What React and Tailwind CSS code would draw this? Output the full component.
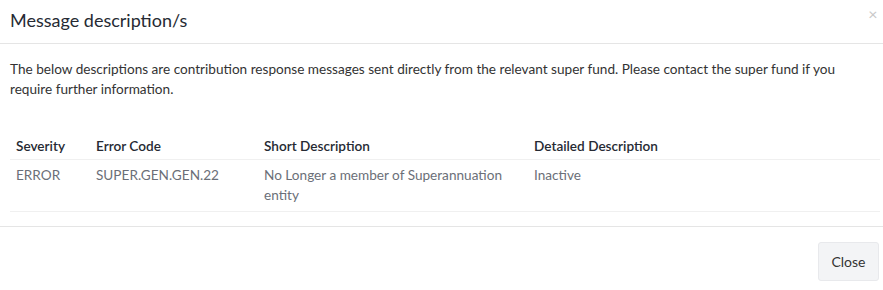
import React from "react";

const rows = [
  {
    severity: "ERROR",
    code: "SUPER.GEN.GEN.22",
    short: "No Longer a member of Superannuation entity",
    detail: "Inactive",
  },
];

export default function App() {
  return (
    <div className="w-[883px] h-[290px] bg-white text-[#333] font-['Lato','Liberation_Sans',sans-serif] overflow-hidden">
      {/* header */}
      <div className="h-[44px] flex items-center justify-between pl-[10px] pr-[4px] border-b border-[#e5e5e5]">
        <h4 className="text-[18px] text-[#262a33] leading-none pb-[4px]">Message description/s</h4>
        <button className="self-start mt-[6px] w-[12px] text-[16px] leading-none text-[#c8c8c8]">×</button>
      </div>

      {/* body */}
      <div className="px-[10px] pt-[15px] pb-[14px]">
        <p className="text-[13.6px] leading-[20px] text-[#333] pr-[8px]">
          The below descriptions are contribution response messages sent directly from the relevant super fund. Please contact the super fund if you require further information.
        </p>

        <table className="w-[870px] mt-[33px] text-[13.6px] text-left border-collapse">
          <thead>
            <tr className="border-b border-[#f0f0f0]">
              <th className="font-semibold text-[#262a33] pl-[6px] pt-[4px] pb-[3px] w-[86px]">Severity</th>
              <th className="font-semibold text-[#262a33] pt-[4px] pb-[3px] w-[168px]">Error Code</th>
              <th className="font-semibold text-[#262a33] pt-[4px] pb-[3px] w-[270px]">Short Description</th>
              <th className="font-semibold text-[#262a33] pt-[4px] pb-[3px]">Detailed Description</th>
            </tr>
          </thead>
          <tbody>
            {rows.map((r) => (
              <tr key={r.code} className="border-b border-[#f0f0f0] align-top text-[#6b6f78]">
                <td className="pl-[6px] pt-[5px] pb-[6px] leading-[20px]">{r.severity}</td>
                <td className="pt-[5px] pb-[6px] leading-[20px]">{r.code}</td>
                <td className="pt-[5px] pb-[6px] pr-[14px] leading-[20px]">{r.short}</td>
                <td className="pt-[5px] pb-[6px] leading-[20px]">{r.detail}</td>
              </tr>
            ))}
          </tbody>
        </table>
      </div>

      {/* footer */}
      <div className="border-t border-[#e5e5e5] flex justify-end pt-[15px] pr-[4px]">
        <button className="w-[61px] h-[39px] rounded-[3px] bg-[#f3f4f6] border border-[#e8e9ec] text-[14px] text-[#333]">Close</button>
      </div>
    </div>
  );
}
